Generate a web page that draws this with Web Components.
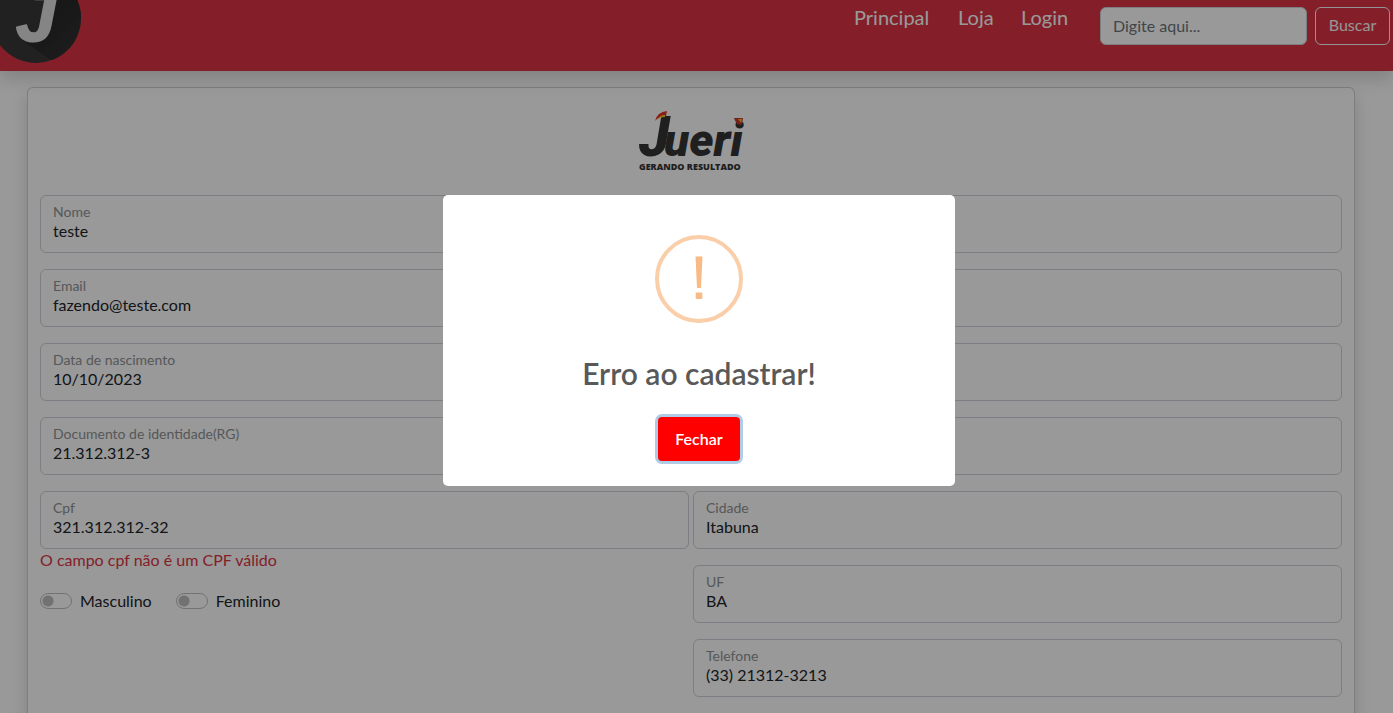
<!DOCTYPE html>
<html lang="pt-BR">
<head>
<meta charset="utf-8">
<title>Jueri - Cadastro</title>
<style>
body { margin: 0; background: #fff; color: #212529; font: 400 16px/24px Lato, "Open Sans", sans-serif; overflow: hidden; }
</style>
</head>
<body>
<site-header></site-header>
<main>
<form-card>
  <text-field slot="left" label="Nome" value="teste"></text-field>
  <text-field slot="left" label="Email" value="fazendo@teste.com"></text-field>
  <text-field slot="left" label="Data de nascimento" value="10/10/2023"></text-field>
  <text-field slot="left" label="Documento de identidade(RG)" value="21.312.312-3"></text-field>
  <text-field slot="left" label="Cpf" value="321.312.312-32" error="O campo cpf não é um CPF válido"></text-field>
  <toggle-switch slot="options">Masculino</toggle-switch>
  <toggle-switch slot="options">Feminino</toggle-switch>
  <text-field slot="right"></text-field>
  <text-field slot="right"></text-field>
  <text-field slot="right"></text-field>
  <text-field slot="right"></text-field>
  <text-field slot="right" label="Cidade" value="Itabuna"></text-field>
  <text-field slot="right" label="UF" value="BA"></text-field>
  <text-field slot="right" label="Telefone" value="(33) 21312-3213"></text-field>
</form-card>
</main>
<alert-dialog>Erro ao cadastrar!</alert-dialog>

<script>
class SiteHeader extends HTMLElement {
  constructor() {
    super();
    this.attachShadow({ mode: "open" }).innerHTML = `
<style>
:host { display: block; position: relative; background: #dc3545; box-shadow: 0 8px 16px rgba(0,0,0,.15); }
header { display: flex; align-items: flex-start; padding: 0 3px 8px 0; }
svg { display: block; flex: none; }
nav { margin-left: auto; display: grid; grid-template-columns: 104px 63px 79px; padding-top: 2px; }
a { color: #fff; text-decoration: none; font-size: 20px; line-height: 30px; }
form { display: flex; gap: 8px; padding-top: 7px; }
input, button { box-sizing: border-box; height: 38px; font: inherit; border-radius: 6px; padding: 0 12px 2px; }
input { width: 207px; border: 1px solid #ced4da; background: #fff; }
input::placeholder { color: #6c757d; opacity: 1; }
button { width: 75px; padding: 0 0 2px; border: 1px solid #f8f9fa; color: #f8f9fa; background: transparent; }
</style>
<header>
  <svg width="81" height="63" viewBox="0 0 81 63" role="img" aria-label="Jueri">
    <defs>
      <clipPath id="disc"><circle cx="36" cy="18" r="45"/></clipPath>
      <linearGradient id="long" x1="0" y1="0" x2="1" y2="1"><stop offset="0" stop-color="#222"/><stop offset="1" stop-color="#343434"/></linearGradient>
    </defs>
    <circle cx="36" cy="18" r="45" fill="#383838"/>
    <path clip-path="url(#disc)" d="M52 0 41 38Q32 47 23 41L54 62 90 50V0Z" fill="url(#long)"/>
    <text x="16" y="41" font-family="Liberation Sans" font-size="72" font-weight="700" font-style="italic" fill="#dedede" stroke="#dedede" stroke-width="2" stroke-linejoin="round">J</text>
  </svg>
  <nav><a href="#">Principal</a><a href="#">Loja</a><a href="#">Login</a></nav>
  <form><input type="search" aria-label="Buscar" placeholder="Digite aqui..."><button type="button">Buscar</button></form>
</header>`;
  }
}

class FormCard extends HTMLElement {
  constructor() {
    super();
    this.attachShadow({ mode: "open" }).innerHTML = `
<style>
:host { display: block; margin: 16px 38px 0 27px; padding: 23px 12px 40px; border: 1px solid rgba(0,0,0,.175); border-radius: 6px; background: #fff; box-shadow: 0 8px 16px rgba(0,0,0,.15); }
svg { display: block; margin: 0 auto 24px; overflow: visible; }
.cols { display: grid; grid-template-columns: 1fr 1fr; gap: 4px; }
.col { display: flex; flex-direction: column; gap: 16px; }
.options { display: flex; gap: 24px; }
</style>
<svg width="104" height="60" viewBox="0 0 104 60" role="img" aria-label="Jueri gerando resultado">
  <text x="0" y="45" font-family="Roboto" font-size="46" font-weight="900" font-style="italic" fill="#343434"><tspan font-size="56">J</tspan><tspan x="25">ueri</tspan></text>
  <path d="M16 10Q18 1 28 0L27 5Q20 5 16 10Z" fill="#e5342d"/>
  <path d="M18 9Q21 4 26 4L26 6Q21 6 18 9Z" fill="#ffc52e"/>
  <path d="M95 7H104L103 13Q98 16 95 7Z" fill="#c53b30"/>
  <path d="M99 8H103L102 12Z" fill="#ffb02e"/>
  <text x="0" y="59" font-family="Open Sans" font-size="9" font-weight="800" fill="#343434">GERANDO RESULTADO</text>
</svg>
<div class="cols">
  <div class="col"><slot name="left"></slot><div class="options"><slot name="options"></slot></div></div>
  <div class="col"><slot name="right"></slot></div>
</div>`;
  }
}

class TextField extends HTMLElement {
  constructor() {
    super();
    this.attachShadow({ mode: "open" }).innerHTML = `
<style>
:host { display: block; }
.box { box-sizing: border-box; height: 58px; border: 1px solid #ced4da; border-radius: 6px; padding: 6px 12px; display: flex; flex-direction: column; }
label { font-size: 14px; line-height: 19px; color: #909294; }
input { display: block; width: 100%; height: 20px; box-sizing: border-box; border: 0; padding: 0; margin: 0; background: none; font: inherit; color: #212529; outline: 0; }
.error { color: #dc3545; line-height: 22px; padding-bottom: 2px; }
</style>
<div class="box"><label for="field"></label><input id="field" type="text"></div>`;
  }
  connectedCallback() {
    const root = this.shadowRoot;
    const label = root.querySelector("label");
    const input = root.querySelector("input");
    if (this.hasAttribute("label")) label.textContent = this.getAttribute("label");
    else { label.remove(); input.setAttribute("aria-label", "Campo"); }
    input.value = this.getAttribute("value") || "";
    if (this.hasAttribute("error")) {
      const error = document.createElement("div");
      error.className = "error";
      error.textContent = this.getAttribute("error");
      root.append(error);
    }
  }
}

class ToggleSwitch extends HTMLElement {
  constructor() {
    super();
    this.attachShadow({ mode: "open" }).innerHTML = `
<style>
:host { display: block; }
label { display: flex; align-items: center; gap: 8px; line-height: 24px; }
input { appearance: none; box-sizing: border-box; width: 32px; height: 16px; margin: 0; border: 1px solid #bfbfbf; border-radius: 8px; background: radial-gradient(circle at 7px 7px, #bfbfbf 5px, transparent 6px); }
</style>
<label><input type="checkbox" role="switch"><slot></slot></label>`;
  }
}

class AlertDialog extends HTMLElement {
  constructor() {
    super();
    this.attachShadow({ mode: "open" }).innerHTML = `
<style>
:host { position: fixed; inset: 0; display: flex; align-items: center; justify-content: center; padding: 0 0 32px 5px; background: rgba(0,0,0,.4); }
.modal { box-sizing: border-box; width: 512px; max-width: 100%; padding: 40px 0 22px; border-radius: 5px; background: #fff; display: flex; flex-direction: column; align-items: center; }
svg { display: block; }
h2 { margin: 32px 0 23px; font-size: 30px; line-height: 36px; font-weight: 600; color: #595959; }
button { width: 82px; height: 44px; margin: 3px; padding: 0; border: 0; border-radius: 4px; background: #f00; color: #fff; font: inherit; font-weight: 600; box-shadow: 0 0 0 3px #b0cbe6; }
</style>
<div class="modal" role="alertdialog" aria-modal="true" aria-labelledby="title">
  <svg width="88" height="88" viewBox="0 0 88 88" aria-hidden="true">
    <circle cx="44" cy="44" r="42" fill="none" stroke="#facea8" stroke-width="4"/>
    <path d="M40.5 21.500H47.500L46 53H42Z M40.700 57.500H47.300V64H40.700Z" fill="#f8bb86"/>
  </svg>
  <h2 id="title"><slot></slot></h2>
  <button type="button">Fechar</button>
</div>`;
  }
}

customElements.define("site-header", SiteHeader);
customElements.define("form-card", FormCard);
customElements.define("text-field", TextField);
customElements.define("toggle-switch", ToggleSwitch);
customElements.define("alert-dialog", AlertDialog);
</script>
</body>
</html>
